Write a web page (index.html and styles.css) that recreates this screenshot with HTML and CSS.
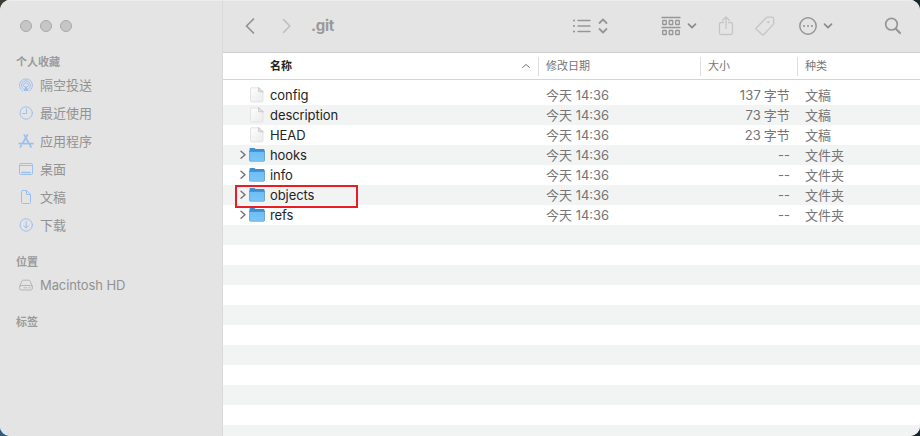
FILE: index.html
```html
<!DOCTYPE html>
<html lang="zh-CN">
<head>
<meta charset="utf-8">
<title>.git</title>
<link rel="stylesheet" href="styles.css">
</head>
<body>
<svg class="defs" width="0" height="0" aria-hidden="true">
  <defs>
    <linearGradient id="paper" x1="0" y1="0" x2="1" y2="1"><stop offset="0" stop-color="#fdfdfd"/><stop offset="1" stop-color="#ebebeb"/></linearGradient>
    <linearGradient id="front" x1="0" y1="0" x2="0" y2="1"><stop offset="0" stop-color="#6dbdf5"/><stop offset="1" stop-color="#7cc6fa"/></linearGradient>
    <symbol id="file" viewBox="0 0 16 16"><path d="M2.700.8h6.800l4.500 4v9q0 1.200-1.200 1.200H2.700q-1.200 0-1.200-1.200V2Q1.500.8 2.700.8z" fill="url(#paper)" stroke="#dedede" stroke-width=".8"/><path d="M9.500.8v3.100q0 .9.900.9H14z" fill="#e4e4e4" stroke="#b5b5b5" stroke-width=".6"/></symbol>
    <symbol id="folder" viewBox="0 0 16 16"><path d="M.5 2q0-.9.900-.9h4l1.200 1h8q.9 0 .9.900V13.500H.5z" fill="#3e8fd0"/><path d="M.5 4.500h15v8.800q0 1-1 1h-13q-1 0-1-1z" fill="url(#front)" stroke="#6a9cc0" stroke-width=".7"/><path d="M.5 4.300h15" stroke="#3e8fd0" stroke-width=".8"/></symbol>
    <symbol id="disclose" viewBox="0 0 6 10"><path d="M1 1.300l4 3.500-4 3.500" fill="none" stroke="#727272" stroke-width="1.400"/></symbol>
    <symbol id="down" viewBox="0 0 10 8"><path d="M1.500 2.200L5 5.700l3.500-3.500" fill="none" stroke="#8b8b8b" stroke-width="1.700" stroke-linecap="round" stroke-linejoin="round"/></symbol>
  </defs>
</svg>
<div class="window">
  <aside class="sidebar">
    <div class="lights"><i></i><i></i><i></i></div>
    <h2>个人收藏</h2>
    <ul>
      <li><svg viewBox="0 0 16 16"><path d="M4.500 13.900a6.500 6.500 0 1 1 7 0M5.400 11.800a4.400 4.400 0 1 1 5.200 0M6.300 9.900a2.400 2.400 0 1 1 3.400 0"/><path class="solid" d="M8 8.300l2.600 5.700H5.400z"/></svg><span>隔空投送</span></li>
      <li><svg viewBox="0 0 16 16"><circle cx="8.200" cy="8" r="6.200"/><path d="M8.500 3.800v4.700H4.800"/></svg><span>最近使用</span></li>
      <li><svg viewBox="0 0 16 16"><path class="thick" d="M6.300 2l6.700 12M9.400 2L4.500 10.500M3.200 12.600l-.8 1.400M1.200 10.600h8M12 10.600h3"/></svg><span>应用程序</span></li>
      <li><svg viewBox="0 0 16 16"><rect x="1.500" y="2.500" width="13" height="11" rx="1.200"/><path d="M1.500 4.500h13"/><path class="thick" d="M4 11.500h8"/></svg><span>桌面</span></li>
      <li><svg viewBox="0 0 16 16"><path d="M4.500 1.500h4l4 4v8q0 1-1 1h-7q-1 0-1-1v-11q0-1 1-1zM8.500 1.500v4h4"/></svg><span>文稿</span></li>
      <li><svg viewBox="0 0 16 16"><circle cx="8.200" cy="8" r="6.200"/><path d="M8.200 4.500v6.500M5.900 8.700l2.300 2.300 2.300-2.300"/></svg><span>下载</span></li>
    </ul>
    <h2 class="places">位置</h2>
    <ul>
      <li class="disk"><svg viewBox="0 0 16 16"><path d="M1.500 9.700l2.300-5.500q.4-1 1.400-1h5.600q1 0 1.400 1l2.300 5.500"/><rect x="1.500" y="8.500" width="13" height="4.500" rx="2"/><path d="M6 10.800h1M8 10.800h1M11 10.800h1.200"/></svg><span>Macintosh HD</span></li>
    </ul>
    <h2 class="tags">标签</h2>
  </aside>
  <main>
    <header class="toolbar">
      <svg class="back" width="12" height="18" viewBox="0 0 12 18"><path d="M9.500 2L2.500 9l7 7"/></svg>
      <svg class="forward" width="12" height="18" viewBox="0 0 12 18"><path d="M2.500 2.500L8.800 9l-6.300 6.500"/></svg>
      <h1>.git</h1>
      <svg class="view" width="36" height="18" viewBox="0 0 36 18"><path d="M6 3.500h12M6 9h12M6 14.500h12"/><path class="dots" d="M2 3.500h.01M2 9h.01M2 14.500h.01"/><path class="bold" d="M27.500 6l3.500-3.500L34.500 6M27.500 12l3.500 3.500 3.500-3.500"/></svg>
      <svg class="group" width="20" height="20" viewBox="0 0 20 20"><path d="M1 1.500h18M1 11.500h18"/><g><rect x="1.700" y="4.500" width="3.600" height="4" rx=".6"/><rect x="8.200" y="4.500" width="3.600" height="4" rx=".6"/><rect x="14.700" y="4.500" width="3.600" height="4" rx=".6"/><rect x="1.700" y="14.500" width="3.600" height="4" rx=".6"/><rect x="8.200" y="14.500" width="3.600" height="4" rx=".6"/><rect x="14.700" y="14.500" width="3.600" height="4" rx=".6"/></g></svg>
      <svg class="menu-arrow" width="10" height="8"><use href="#down"/></svg>
      <svg class="share faint" width="16" height="20" viewBox="0 0 16 20"><path d="M5.500 6.500H3Q1.500 6.500 1.500 8v9q0 1.500 1.500 1.500h10q1.500 0 1.500-1.500V8q0-1.500-1.500-1.500h-2.500M8 12.500V1.200M4.700 4.300L8 1l3.300 3.300"/></svg>
      <svg class="tag faint" width="20" height="20" viewBox="0 0 20 20"><path d="M1.400 11.700L11 2q.8-.8 2-.8h4q1.700 0 1.700 1.700v4q0 1.200-.8 2L9 18.200q-1.100 1-2.200 0l-5.300-4.600q-1.100-.9-.1-1.900z"/><circle cx="13.300" cy="6.200" r=".5"/></svg>
      <svg class="more" width="18" height="18" viewBox="0 0 18 18"><circle cx="9" cy="9" r="8.200"/><path class="dots" d="M5 9h.01M9 9h.01M13 9h.01"/></svg>
      <svg class="menu-arrow" width="10" height="8"><use href="#down"/></svg>
      <svg class="search" width="18" height="18" viewBox="0 0 18 18"><circle cx="7.500" cy="7.200" r="5.800"/><path class="handle" d="M11.800 11.700l4.200 4.300"/></svg>
    </header>
    <div class="columns">
      <div class="by-name">名称<svg width="10" height="6" viewBox="0 0 10 6"><path d="M1.500 4.500L5 1.500l3.500 3"/></svg></div>
      <div>修改日期</div><div>大小</div><div>种类</div>
    </div>
    <div class="listing">
      <div class="row"><i></i><svg class="icon"><use href="#file"/></svg><b>config</b><span>今天 14:36</span><span class="size">137 字节</span><span>文稿</span></div>
      <div class="row"><i></i><svg class="icon"><use href="#file"/></svg><b>description</b><span>今天 14:36</span><span class="size">73 字节</span><span>文稿</span></div>
      <div class="row"><i></i><svg class="icon"><use href="#file"/></svg><b>HEAD</b><span>今天 14:36</span><span class="size">23 字节</span><span>文稿</span></div>
      <div class="row"><svg class="open"><use href="#disclose"/></svg><svg class="icon"><use href="#folder"/></svg><b>hooks</b><span>今天 14:36</span><span class="size none">--</span><span>文件夹</span></div>
      <div class="row"><svg class="open"><use href="#disclose"/></svg><svg class="icon"><use href="#folder"/></svg><b>info</b><span>今天 14:36</span><span class="size none">--</span><span>文件夹</span></div>
      <div class="row marked"><svg class="open"><use href="#disclose"/></svg><svg class="icon"><use href="#folder"/></svg><b>objects</b><span>今天 14:36</span><span class="size none">--</span><span>文件夹</span></div>
      <div class="row"><svg class="open"><use href="#disclose"/></svg><svg class="icon"><use href="#folder"/></svg><b>refs</b><span>今天 14:36</span><span class="size none">--</span><span>文件夹</span></div>
    </div>
  </main>
</div>
</body>
</html>
```
FILE: styles.css
```css
*, *::after { box-sizing: border-box; }
body {
  margin: 0;
  height: 436px;
  overflow: hidden;
  background:
    linear-gradient(#3a3d30 50%, #2f5c7d 50%) left / 50% 100% no-repeat,
    #14272b;
  font: 13px/20px Inter, "Noto Sans CJK SC", sans-serif;
  color: #757575;
}
.defs { position: absolute; }
svg { display: block; flex: none; fill: none; stroke-linecap: round; stroke-linejoin: round; }
.window {
  display: flex;
  height: 436px;
  border-radius: 10px;
  overflow: hidden;
  background: #fff;
}
.sidebar {
  width: 223px;
  flex: none;
  padding: 19px 0 0 16px;
  background: #e4e4e4;
  border-right: 1px solid #dadada;
  border-top: 1px solid #ededed;
}
.lights { display: flex; gap: 8px; padding-left: 4px; height: 12px; }
.lights i { width: 12px; height: 12px; border-radius: 50%; background: #c6c6c6; border: 1px solid #a9a9a9; }
h2 { margin: 20px 0 0; font-size: 11px; line-height: 20px; font-weight: 700; color: #9b9b9b; }
ul { list-style: none; margin: 0; padding: 0; }
.sidebar li { display: flex; align-items: center; gap: 6px; height: 28px; padding-left: 2px; color: #929292; }
.sidebar ul:first-of-type { margin-top: -1px; }
.sidebar li svg { width: 16px; height: 16px; stroke: #9cc0ee; stroke-width: 1; }
.sidebar li .thick { stroke-width: 1.7; }
.sidebar li .solid { fill: #9cc0ee; stroke: none; }
.sidebar .disk svg { stroke: #b5b5b5; }
.sidebar .disk { padding-bottom: 2px; letter-spacing: -.1px; }
h2.places { margin-top: 13px; }
h2.tags { margin-top: 12px; }
main { flex: 1; min-width: 0; display: flex; flex-direction: column; }
.toolbar {
  display: flex;
  align-items: center;
  height: 53px;
  padding: 0 18px 1px 22px;
  background: #e4e4e4;
  border-top: 1px solid #ededed;
  border-bottom: 1px solid #cfcfcf;
  stroke: #969696;
}
.toolbar svg { stroke-width: 1.3; }
.toolbar h1 { margin: 0; width: 281px; padding-left: 18px; font-size: 15px; letter-spacing: -.3px; line-height: 20px; font-weight: 700; color: #999; }
.toolbar .back { margin-left: -1px; margin-right: 1px; stroke: #919191; stroke-width: 1.7; }
.toolbar .forward { margin-left: 24px; stroke: #bebebe; stroke-width: 1.6; }
.toolbar .view { margin-left: -2px; }
.toolbar .dots { stroke-width: 2.1; }
.toolbar .bold { margin: 0; stroke-width: 1.8; }
.toolbar .group { margin-left: 53px; }
.toolbar .menu-arrow { margin-left: 6px; }
.toolbar .share { margin-left: 21px; }
.toolbar .tag { margin-left: 21px; }
.toolbar .faint { stroke: #c5c5c5; }
.toolbar .more { margin-left: 24px; stroke-width: 1.5; }
.toolbar .search { margin-left: auto; stroke-width: 1.7; }
.toolbar .handle { stroke-width: 2.2; }
.columns {
  display: grid;
  grid-template-columns: 315px 162px 97px 1fr;
  align-items: center;
  height: 27px;
  flex: none;
  border-bottom: 1px solid #d4d4d4;
  font-size: 11px;
}
.columns div { height: 19px; line-height: 18px; padding-left: 7px; border-left: 1px solid #dedede; }
.columns .by-name { display: flex; align-items: center; justify-content: space-between; padding: 0 7px 0 47px; border: 0; font-weight: 700; color: #222; }
.by-name svg { stroke: #777; stroke-width: 1; }
.listing {
  flex: 1;
  padding-top: 5px;
  background: repeating-linear-gradient(#fff 0 20px, #f2f3f3 20px 40px) 0 5px no-repeat;
}
.row {
  position: relative;
  display: grid;
  grid-template-columns: 26px 21px 276px 144px 100px 15px 1fr;
  height: 20px;
  align-items: center;
}
.row b { font-weight: 400; letter-spacing: -.08px; color: #242424; }
.row .icon { width: 16px; height: 16px; }
.row .open { width: 6px; height: 10px; margin-left: 17px; margin-top: -1px; }
.row .size { text-align: right; word-spacing: -1px; letter-spacing: .15px; }
.row .none { letter-spacing: 0; }
.row span:last-child { grid-column: 7; }
.marked::after {
  content: "";
  position: absolute;
  left: 12px;
  top: 0;
  width: 123px;
  height: 23px;
  border: 2px solid #eb1c24;
  z-index: 1;
}
```
